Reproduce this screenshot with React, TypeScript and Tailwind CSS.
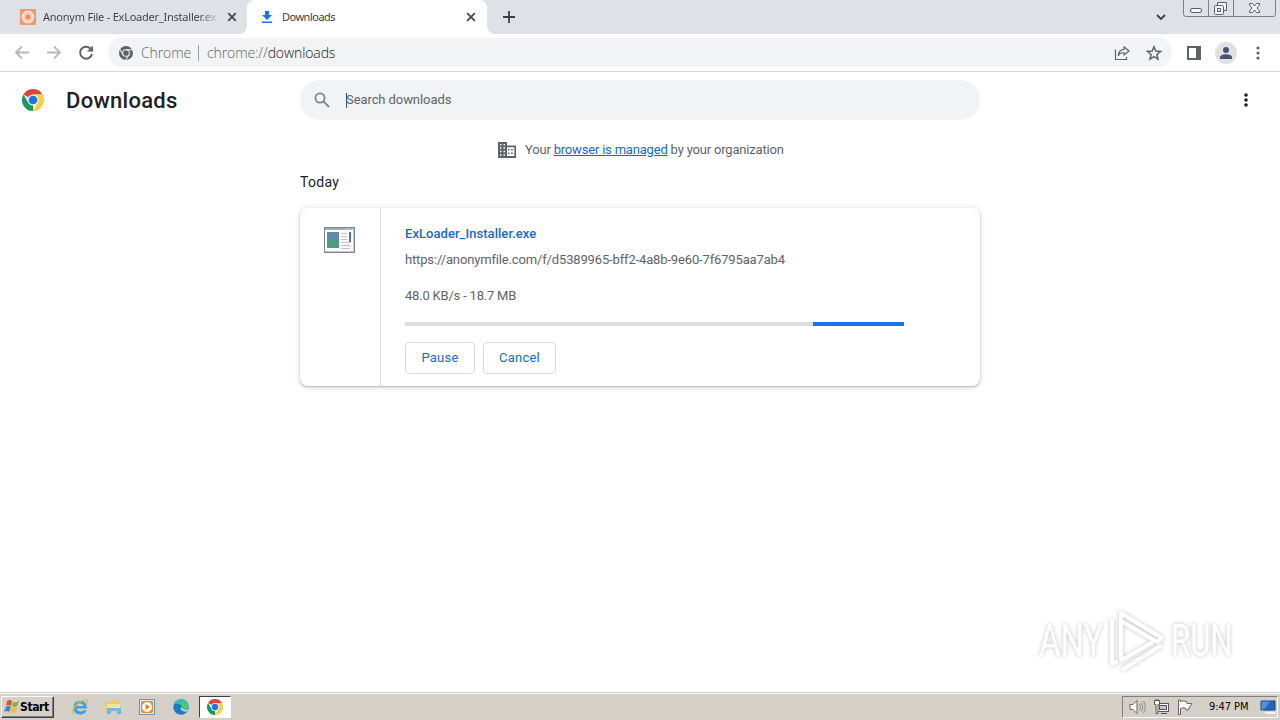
import React from "react";

const ChromeLogo = ({ size = 22, mono = false }: { size?: number; mono?: boolean }) => (
  <svg width={size} height={size} viewBox="0 0 48 48" className="shrink-0">
    <circle cx="24" cy="24" r="24" fill={mono ? "#5f6368" : "#fff"} />
    {mono ? (
      <g stroke="#f1f3f4" strokeWidth="3.5" fill="none">
        <circle cx="24" cy="24" r="11.5" />
        <path d="M24 12.5H46M14 30L3 11M34 30L23 48" />
      </g>
    ) : (
      <g>
        <path d="M24 24L3.2 12A24 24 0 0 1 44.800 12H24Z" fill="#db4437" />
        <path d="M3.2 12L13.600 30L24 36L24 48A24 24 0 0 1 3.200 12Z" fill="#0f9d58" />
        <path d="M44.800 12A24 24 0 0 1 24 48L34.400 30L34.400 18L24 12Z" fill="#ffcd40" />
        <circle cx="24" cy="24" r="12" fill="#f1f1f1" />
        <circle cx="24" cy="24" r="9.5" fill="#1a73e8" />
      </g>
    )}
  </svg>
);

const CloseIcon = () => (
  <svg width="10" height="10" viewBox="0 0 10 10" className="shrink-0">
    <path d="M1.2 1.2L8.8 8.8M8.8 1.2L1.2 8.8" stroke="#45494d" strokeWidth="1.8" />
  </svg>
);

const Dots = ({ color, r = 1.8 }: { color: string; r?: number }) => (
  <svg width="6" height="16" viewBox="0 0 6 16" fill={color}>
    <circle cx="3" cy="3" r={r} />
    <circle cx="3" cy="8" r={r} />
    <circle cx="3" cy="13" r={r} />
  </svg>
);

const TabStrip = () => (
  <div className="flex h-[34px] bg-white font-['Noto_Sans',sans-serif] text-[11px] text-[#3c4043]">
    <div className="flex w-[247px] items-center rounded-br-lg bg-[#dee1e6] pl-5">
      <svg width="16" height="16" viewBox="0 0 16 16" className="shrink-0">
        <rect width="16" height="16" rx="1" fill="#ee9a70" />
        <circle cx="8" cy="8" r="5.300" fill="none" stroke="#fde3d5" strokeWidth="2.200" />
        <circle cx="8" cy="8" r="4" fill="#fbd3bf" />
        <circle cx="8" cy="8" r="2.500" fill="#ee8a5a" />
      </svg>
      <span className="ml-[7px] w-[177px] bg-linear-to-r from-[#3c4043] from-88% to-transparent bg-clip-text tracking-[-0.23px] whitespace-nowrap text-transparent">
        Anonym File - ExLoader_Installer.ex
      </span>
      <span className="ml-[7px]">
        <CloseIcon />
      </span>
    </div>
    <div className="w-60 bg-[#dee1e6]">
      <div className="flex h-full items-center rounded-t-lg bg-white pl-[14px]">
        <svg width="12" height="14" viewBox="0 0 12 14">
          <path d="M4 1H8V5H11L6 10L1 5H4ZM1 11.500H11V13H1Z" fill="#1a73e8" />
        </svg>
        <span className="ml-[9px] w-[178px] tracking-[-0.5px]">Downloads</span>
        <span className="ml-[6px]">
          <CloseIcon />
        </span>
      </div>
    </div>
    <div className="flex flex-1 items-center rounded-bl-lg bg-[#dee1e6] pl-4">
      <svg width="12" height="12" viewBox="0 0 12 12">
        <path d="M6 0V12M0 6H12" stroke="#3c4043" strokeWidth="1.8" />
      </svg>
      <svg width="10" height="7" viewBox="0 0 10 7" className="ml-auto">
        <path d="M1 1L5 5L9 1" stroke="#3c4043" strokeWidth="1.8" fill="none" />
      </svg>
      <WindowButtons />
    </div>
  </div>
);

const WindowButtons = () => (
  <svg width="93" height="18" viewBox="0 0 93 18" className="mr-1 ml-[17px] self-start" fill="none" stroke="#7d828a">
    <path d="M.5 0V14Q.5 16.5 3 16.5H90Q92.500 16.500 92.500 14V0M25.500 0V16M50.500 0V16" />
    <g stroke="#5b5f66">
      <rect x="7.500" y="8.500" width="11" height="4" rx="1.500" fill="#f5f6f8" />
      <path d="M34.500 5V2.500H43.500V10.500H41" fill="#f5f6f8" />
      <rect x="31.500" y="5.500" width="9" height="9" rx="1" fill="#f5f6f8" />
      <rect x="34.500" y="8.500" width="3" height="3" />
      <path d="M66.500 3.500H69.500L71.500 6L73.500 3.500H76.500V5L74 8L76.500 11V12.500H73.500L71.500 10L69.500 12.500H66.500V11L69 8L66.500 5Z" fill="#f5f6f8" />
    </g>
  </svg>
);

const Toolbar = () => (
  <div className="flex h-[38px] items-center border-b border-[#d5d7da] bg-white pl-[14px]">
    <svg width="16" height="16" viewBox="0 0 16 16" fill="none" stroke="#b6b8bb" strokeWidth="1.8">
      <path d="M15 7.500H2M8 1.500L2 7.500L8 13.500" />
    </svg>
    <svg width="16" height="16" viewBox="0 0 16 16" className="ml-4" fill="none" stroke="#b6b8bb" strokeWidth="1.8">
      <path d="M1 7.500H14M8 1.500L14 7.500L8 13.500" />
    </svg>
    <svg width="16" height="16" viewBox="0 0 16 16" className="ml-4">
      <path d="M14 9A6 6 0 1 1 12.500 3.500" fill="none" stroke="#5f6368" strokeWidth="2" />
      <path d="M15 .5V6.500H9Z" fill="#5f6368" />
    </svg>
    <div className="ml-[14px] flex h-[29px] w-[1064px] items-center rounded-full bg-[#f1f3f4] pl-[11px] font-['Open_Sans',sans-serif] text-sm font-light">
      <ChromeLogo size={14} mono />
      <span className="ml-2 w-[50px] tracking-[-0.1px] whitespace-nowrap text-[#5f6368]">Chrome</span>
      <span className="ml-[7px] h-4 w-px bg-[#9aa0a6]" />
      <span className="ml-2 tracking-[-0.1px] whitespace-nowrap text-[#5f6368]">
        chrome://<span className="text-[#202124]">downloads</span>
      </span>
      <svg width="16" height="16" viewBox="0 0 16 16" className="ml-auto" fill="none" stroke="#5f6368" strokeWidth="1.2">
        <path d="M1.500 4.500V14.500H12.500V12" />
        <path d="M10 1.800L15 6L10 10V7.800Q6 7.500 4.300 10.500Q4.800 5 10 4.300Z" strokeLinejoin="round" />
      </svg>
      <svg width="16" height="16" viewBox="0 0 16 16" className="mr-[10px] ml-4" fill="none" stroke="#5f6368" strokeWidth="1.5">
        <path d="M8 1.800L9.800 6.100L14.500 6.500L10.900 9.500L12 14.100L8 11.600L4 14.100L5.100 9.500L1.500 6.500L6.200 6.100Z" />
      </svg>
    </div>
    <svg width="14" height="14" viewBox="0 0 14 14" className="ml-[15px]">
      <path d="M0 0H14V14H0ZM2 2V12H9V2Z" fill="#5f6368" fillRule="evenodd" />
    </svg>
    <div className="ml-[14px] flex size-[22px] items-center justify-center rounded-full bg-[#dfe1e5]">
      <svg width="12" height="12" viewBox="0 0 12 12" fill="#4a5470">
        <circle cx="6" cy="3" r="3" />
        <path d="M0 12V10Q1 7.200 6 7.200Q11 7.200 12 10V12Z" />
      </svg>
    </div>
    <div className="ml-[18px]">
      <Dots color="#5f6368" r={1.6} />
    </div>
  </div>
);

const DownloadsHeader = () => (
  <header className="flex h-14 items-center pl-[22px]">
    <ChromeLogo size={22} />
    <h1 className="ml-[22px] w-[234px] text-[22px] font-medium tracking-[0.27px] text-[#202124]">Downloads</h1>
    <div className="flex h-10 w-[680px] items-center rounded-full bg-[#f1f3f4] pl-[14px]">
      <svg width="16" height="16" viewBox="0 0 16 16" fill="none" stroke="#80868b" strokeWidth="1.8">
        <circle cx="6" cy="6" r="4.600" />
        <path d="M9.500 9.500L15 15" />
      </svg>
      <span className="ml-4 h-[15px] w-px bg-[#1a56b0]" />
      <span className="-ml-px text-[13px] tracking-[-0.08px] text-[#5f6368]">Search downloads</span>
    </div>
    <div className="ml-[263px]">
      <Dots color="#202124" />
    </div>
  </header>
);

const FileIcon = () => (
  <svg width="31" height="26" viewBox="0 0 31 26">
    <rect x=".5" y=".5" width="30" height="25" fill="#fbfbfb" stroke="#7d858b" />
    <path d="M1 24.500H30M29.500 3V25" stroke="#c3c7ca" />
    <rect x="1" y="1" width="29" height="2" fill="#a3adb4" />
    <path d="M22 2H23M25 2H26M28 2H29" stroke="#fff" />
    <rect x="3" y="5" width="12" height="16" fill="#5f8cab" />
    <path d="M3 14Q8 10 15 15V21H3Z" fill="#4d9b80" />
    <path d="M17 6.500H23M17 9.500H23M17 12.500H23M17 15.500H26M17 18.500H26M17 21.500H26" stroke="#d6b9b9" />
    <rect x="25" y="5" width="2" height="10" fill="#477e92" />
  </svg>
);

const DownloadCard = () => (
  <div className="mx-auto mt-[17px] flex h-[178px] w-[680px] rounded-lg bg-white shadow-[0_1px_2px_0_rgba(60,64,67,0.3),0_1px_5px_1px_rgba(60,64,67,0.15)]">
    <div className="w-[81px] border-r border-[#d9dadc] pt-[19px] pl-6">
      <FileIcon />
    </div>
    <div className="flex flex-col pt-[17px] pl-6 text-[13px] leading-[18px] whitespace-nowrap text-[#5f6368]">
      <a className="font-medium tracking-[0.05px] text-[#1967d2]">ExLoader_Installer.exe</a>
      <span className="mt-2 tracking-[-0.15px]">https://anonymfile.com/f/d5389965-bff2-4a8b-9e60-7f6795aa7ab4</span>
      <span className="mt-[18px] tracking-[-0.2px]">48.0 KB/s - 18.7 MB</span>
      <div className="mt-[17px] flex h-1 w-[499px] justify-end bg-[#dddddd]">
        <div className="w-[91px] bg-[#1a73e8]" />
      </div>
      <div className="mt-4 flex gap-2 tracking-[0.2px] text-[#1967d2]">
        <button className="h-8 w-[70px] rounded border border-[#dadce0]">Pause</button>
        <button className="h-8 w-[73px] rounded border border-[#dadce0]">Cancel</button>
      </div>
    </div>
  </div>
);

const Watermark = () => (
  <div className="absolute top-[609px] left-[1039px] flex h-16 w-[198px] items-center justify-between font-['Roboto',sans-serif] text-[45px] text-white drop-shadow-[0_0_2px_rgba(0,0,0,0.24)]">
    <span className="w-[67px] origin-left scale-x-[0.73]">ANY</span>
    <svg width="56" height="62" viewBox="0 0 56 62" className="absolute left-[70px]" fill="none" stroke="#fff" strokeWidth="4" strokeLinejoin="round">
      <path d="M12 49V3L53 28L48 32L12 11" />
      <path d="M3 9V54L9 51M13 60L53 35M11 51L44 32" />
    </svg>
    <span className="w-[66px] origin-left scale-x-[0.69]">RUN</span>
  </div>
);

const Taskbar = () => (
  <div className="flex h-7 items-center border-t border-[#d4d0c8] bg-[#d4d0c8] pt-px font-['DejaVu_Sans_Condensed','DejaVu_Sans',sans-serif] text-[11px] text-black shadow-[inset_0_1px_0_#fff]">
    <div className="ml-px flex h-[22px] w-[53px] items-center border border-t-white border-r-[#404040] border-b-[#404040] border-l-white pl-[2px] shadow-[inset_-1px_-1px_0_#808080]">
      <svg width="16" height="16" viewBox="0 0 16 16" className="shrink-0">
        <path d="M3 2Q6 0 8 2L7 7Q4 5 2 7Z" fill="#e65125" />
        <path d="M9 3Q12 4 15 2L13 7Q10 9 8 7Z" fill="#7eb53b" />
        <path d="M2 8Q4 6 7 8L5 13Q3 11 0 13Z" fill="#3e82ca" />
        <path d="M8 8Q10 10 13 8L12 13Q8 15 6 13Z" fill="#f5bb31" />
      </svg>
      <span className="text-[12px] font-bold tracking-[-0.4px]">Start</span>
    </div>
    <svg width="18" height="18" viewBox="0 0 18 18" className="ml-[17px]">
      <path d="M16 10.500H6Q6.500 13.500 9.500 13.500Q11.500 13.500 12.500 12.300H15.700Q14 16.500 9.500 16.500Q2.500 16.500 2.500 9.500Q2.500 2.800 9.300 2.800Q16 2.800 16 10.500ZM6 8H12.600Q12 5.500 9.300 5.500Q6.500 5.500 6 8Z" fill="#3aa2de" />
      <path d="M2 16Q0 13 5 7.500Q11 1 16 2Q17.500 3 15.500 6" fill="none" stroke="#e6b745" strokeWidth="1.300" />
    </svg>
    <svg width="17" height="17" viewBox="0 0 17 17" className="ml-4">
      <path d="M1 3H6L7 1H14L15 4V12H1Z" fill="#eacb65" />
      <path d="M2 5H15V12H2Z" fill="#f7e59b" />
      <path d="M2 9H16V15H12V12H6V15H2Z" fill="#77b8d8" />
    </svg>
    <svg width="16" height="16" viewBox="0 0 16 16" className="ml-[17px]">
      <rect x=".5" y=".5" width="15" height="15" fill="#d9ecf9" stroke="#6697be" />
      <rect x="2" y="2" width="12" height="12" rx="2" fill="#ef8a21" />
      <circle cx="8" cy="8" r="5" fill="#fff" />
      <path d="M6.500 5L11 8L6.500 11Z" fill="#ef7a11" />
    </svg>
    <svg width="16" height="16" viewBox="0 0 16 16" className="ml-[18px]">
      <circle cx="8" cy="8" r="7.700" fill="#167bc0" />
      <path d="M1 5Q4 0 9 .3Q15.500 1 15.700 7Q15.500 10 12 10.500H9Q10 6 6 5Q3 4 1 5Z" fill="#45c878" />
      <path d="M1 5Q3 1 8 .3Q12 1 13 4Q8 2 1 5Z" fill="#35b9d2" />
      <path d="M9 8Q8 11 15 10.500L14.500 12.500Q9 13 7.500 10Q7.500 8.500 9 8Z" fill="#d4d0c8" />
    </svg>
    <div className="ml-[10px] flex h-[22px] w-[32px] items-center justify-center border border-t-[#404040] border-r-white border-b-white border-l-[#404040] bg-white">
      <ChromeLogo size={16} />
    </div>
    <div className="mr-[2px] ml-auto flex h-[22px] w-[156px] items-center border border-t-[#808080] border-r-white border-b-white border-l-[#808080] pl-[6px]">
      <svg width="17" height="16" viewBox="0 0 17 16" fill="none" stroke="#8b8b8b">
        <path d="M1 5.500H4L8 1.500V14.500L4 10.500H1Z" fill="#fafafa" stroke="#666" />
        <path d="M10.500 5Q12.500 8 10.500 11M12.500 3.500Q15 8 12.500 12.500M14.500 2Q18 8 14.500 14" />
      </svg>
      <svg width="16" height="16" viewBox="0 0 16 16" className="ml-[7px]" fill="#fafafa" stroke="#555">
        <rect x="4.500" y="4.500" width="11" height="8" />
        <rect x="6.500" y="6.500" width="7" height="4" fill="#c2c2c2" />
        <path d="M1.500 1.500H6.500V5.500H5V14.500H3V5.500H1.500ZM8 14.500H14M3 0V2M5 0V2" />
      </svg>
      <svg width="16" height="16" viewBox="0 0 16 16" className="ml-[8px]" fill="#fafafa" stroke="#666">
        <path d="M1.500 1V15.500H3.500V9.500Q7 8 9 9.500V11Q12 12 12 9L15 4.500H10V3Q7 1 3.500 2.500V1Z" />
      </svg>
      <span className="ml-4 w-[43px] tracking-[-0.05px] whitespace-nowrap">9:47 PM</span>
      <svg width="17" height="15" viewBox="0 0 17 15" className="ml-2">
        <path d="M1 1H15V10H1Z" fill="#2467ba" stroke="#173f81" />
        <path d="M1.500 1.500H10L4 9.500H1.500Z" fill="#4c94db" />
        <path d="M3 12H15L16 14H8Z" fill="#f6f6f6" />
      </svg>
    </div>
  </div>
);

const App = () => {
  return (
    <div className="relative flex h-[720px] w-[1280px] flex-col overflow-hidden bg-white font-['Roboto',sans-serif]">
      <TabStrip />
      <Toolbar />
      <DownloadsHeader />
      <main className="flex-1">
        <div className="mx-auto mt-[13px] flex h-[18px] w-[284px] items-center text-[13px] whitespace-nowrap text-[#5f6368]">
          <svg width="18" height="16" viewBox="0 0 18 16" className="shrink-0">
            <path
              d="M0 0H9V3.500H18V16H0ZM2 2V3.500H3.500V2ZM5.500 2V3.500H7V2ZM2 5.300V6.800H3.500V5.300ZM5.500 5.300V6.800H7V5.300ZM2 8.800V10.300H3.500V8.800ZM5.500 8.800V10.300H7V8.800ZM2 12.300V13.800H3.500V12.300ZM5.500 12.300V13.800H7V12.300ZM9 5.300V14H16.300V5.300Z"
              fill="#5f6368"
              fillRule="evenodd"
            />
            <path d="M10 7H11.500V8.500H10ZM13 7H14.800V8.500H13ZM10 10.500H11.500V12H10ZM13 10.500H14.800V12H13Z" fill="#5f6368" />
          </svg>
          <span className="ml-[9px] tracking-[-0.19px]">
            Your <a className="text-[#1967d2] underline">browser is managed</a> by your organization
          </span>
        </div>
        <h2 className="mx-auto mt-[14px] h-[18px] w-[680px] text-sm leading-[18px] tracking-[0.3px] text-[#202124]">Today</h2>
        <DownloadCard />
      </main>
      <Watermark />
      <Taskbar />
    </div>
  );
};

export default App;
